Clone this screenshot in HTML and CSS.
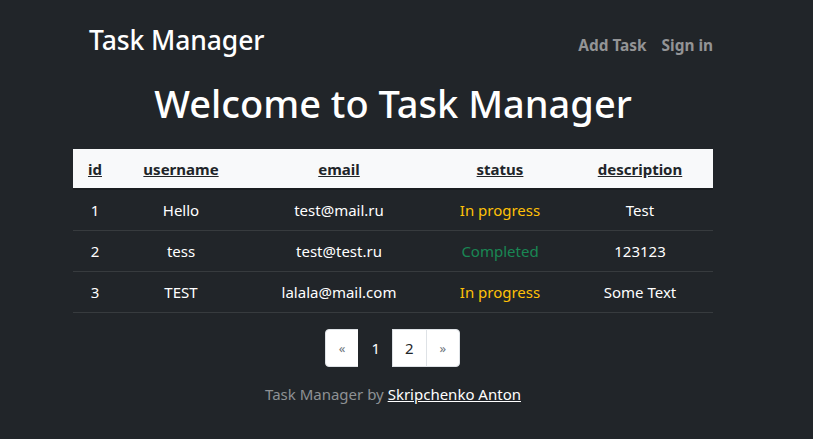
FILE: index.html
```html
<!DOCTYPE html>
<html lang="en">
<head>
<meta charset="utf-8">
<title>Task Manager</title>
<link rel="stylesheet" href="styles.css">
</head>
<body>
<div class="container">
  <nav class="navbar">
    <a class="brand" href="#">Task Manager</a>
    <div class="nav-links">
      <a href="#">Add Task</a>
      <a href="#">Sign in</a>
    </div>
  </nav>
  <h1 class="title">Welcome to Task Manager</h1>
  <table class="tasks">
    <colgroup>
      <col class="c-id"><col class="c-user"><col class="c-email"><col class="c-status"><col class="c-desc">
    </colgroup>
    <thead>
      <tr>
        <th><a href="#">id</a></th>
        <th><a href="#">username</a></th>
        <th><a href="#">email</a></th>
        <th><a href="#">status</a></th>
        <th><a href="#">description</a></th>
      </tr>
    </thead>
    <tbody>
      <tr><td>1</td><td>Hello</td><td>test@mail.ru</td><td class="warn">In progress</td><td>Test</td></tr>
      <tr><td>2</td><td>tess</td><td>test@test.ru</td><td class="done">Completed</td><td>123123</td></tr>
      <tr><td>3</td><td>TEST</td><td>lalala@mail.com</td><td class="warn">In progress</td><td>Some Text</td></tr>
    </tbody>
  </table>
  <ul class="pagination">
    <li class="page first"><a href="#">&laquo;</a></li>
    <li class="page active"><a href="#">1</a></li>
    <li class="page"><a href="#">2</a></li>
    <li class="page last"><a href="#">&raquo;</a></li>
  </ul>
  <footer class="footer">Task Manager by <a href="#">Skripchenko Anton</a></footer>
</div>
</body>
</html>
```
FILE: styles.css
```css
html, body {
  margin: 0;
  padding: 0;
  background: #212529;
  color: #ffffff;
  font-family: "Noto Sans", "Open Sans", sans-serif;
  font-size: 16px;
}
.container {
  width: 640px;
  margin: 0 0 0 73px;
}
.navbar {
  display: flex;
  justify-content: space-between;
  align-items: center;
  padding: 21px 0 0 16px;
  height: 38px;
}
.brand {
  color: #ffffff;
  text-decoration: none;
  font-size: 26.5px;
  font-weight: 500;
  letter-spacing: -0.1px;
}
.nav-links {
  display: flex;
  gap: 15px;
  padding-top: 10px;
}
.nav-links a {
  color: #939496;
  font-weight: 700;
  text-decoration: none;
  font-size: 15.4px;
}
.title {
  margin: 20px 0 22px;
  text-align: center;
  font-size: 38px;
  font-weight: 500;
  line-height: 48px;
}
.tasks {
  width: 640px;
  border-collapse: collapse;
  table-layout: fixed;
}
.c-id { width: 44px; }
.c-user { width: 128px; }
.c-email { width: 188px; }
.c-status { width: 134px; }
.c-desc { width: 146px; }
.tasks th {
  background: #f8f9fa;
  height: 39px;
  padding: 0;
  border-bottom: 2px solid #1a1d20;
  font-size: 15px;
  font-weight: 700;
}
.tasks th a {
  color: #212529;
  text-decoration: underline;
}
.tasks td {
  height: 40px;
  padding: 0;
  text-align: center;
  border-bottom: 1px solid #373b3e;
  font-size: 15px;
}
.tasks td.warn { color: #ffc107; }
.tasks td.done { color: #198754; }
.pagination {
  list-style: none;
  display: flex;
  justify-content: center;
  margin: 16px 0 0;
  padding: 0;
}
.page a {
  display: block;
  height: 36px;
  line-height: 36px;
  padding: 0 12px;
  background: #ffffff;
  color: #212529;
  text-decoration: none;
  border: 1px solid #dee2e6;
  margin-left: -1px;
  font-size: 15px;
}
.page.first a, .page.last a {
  color: #6c757d;
  font-size: 13px;
  padding: 0 13px;
}
.page.first a { border-radius: 4px 0 0 4px; }
.page.last a { border-radius: 0 4px 4px 0; }
.page.active a {
  background: #212529;
  color: #ffffff;
  border-color: #212529;
}
.footer {
  text-align: center;
  margin-top: 17px;
  color: #8e9194;
  font-size: 15px;
}
.footer a {
  color: #ffffff;
}
```
